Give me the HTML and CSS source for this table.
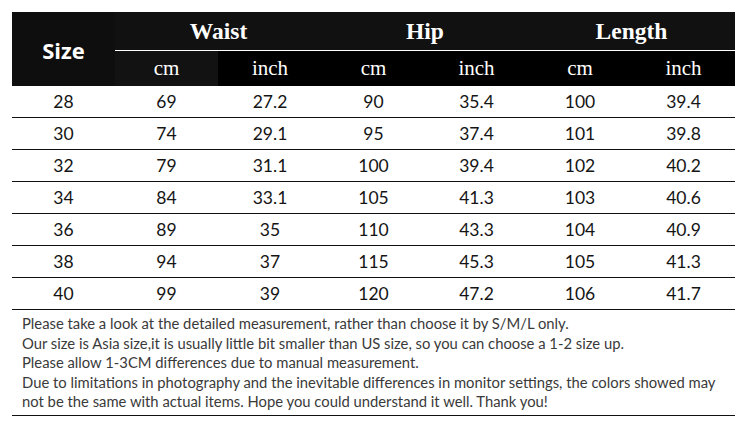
FILE: index.html
```html
<!DOCTYPE html>
<html>
<head>
<meta charset="utf-8">
<link rel="stylesheet" href="styles.css">
</head>
<body>
<div class="chart">
  <table class="size-table">
    <colgroup>
      <col class="c-size"><col class="c1"><col class="c2"><col class="c1"><col class="c1"><col class="c2"><col class="c1">
    </colgroup>
    <thead>
      <tr class="head-top">
        <th rowspan="2" class="size-head">Size</th>
        <th colspan="2" class="group">Waist</th>
        <th colspan="2" class="group">Hip</th>
        <th colspan="2" class="group">Length</th>
      </tr>
      <tr class="head-units">
        <th class="unit unit-gray">cm</th>
        <th class="unit">inch</th>
        <th class="unit">cm</th>
        <th class="unit">inch</th>
        <th class="unit">cm</th>
        <th class="unit">inch</th>
      </tr>
    </thead>
    <tbody>
      <tr><td>28</td><td>69</td><td>27.2</td><td>90</td><td>35.4</td><td>100</td><td>39.4</td></tr>
      <tr><td>30</td><td>74</td><td>29.1</td><td>95</td><td>37.4</td><td>101</td><td>39.8</td></tr>
      <tr><td>32</td><td>79</td><td>31.1</td><td>100</td><td>39.4</td><td>102</td><td>40.2</td></tr>
      <tr><td>34</td><td>84</td><td>33.1</td><td>105</td><td>41.3</td><td>103</td><td>40.6</td></tr>
      <tr><td>36</td><td>89</td><td>35</td><td>110</td><td>43.3</td><td>104</td><td>40.9</td></tr>
      <tr><td>38</td><td>94</td><td>37</td><td>115</td><td>45.3</td><td>105</td><td>41.3</td></tr>
      <tr><td>40</td><td>99</td><td>39</td><td>120</td><td>47.2</td><td>106</td><td>41.7</td></tr>
    </tbody>
  </table>
  <div class="notes">
    <p>Please take a look at the detailed measurement, rather than choose it by S/M/L only.</p>
    <p>Our size is Asia size,it is usually little bit smaller than US size, so you can choose a 1-2 size up.</p>
    <p>Please allow 1-3CM differences due to manual measurement.</p>
    <p>Due to limitations in photography and the inevitable differences in monitor settings, the colors showed may not be the same with actual items. Hope you could understand it well. Thank you!</p>
  </div>
</div>
</body>
</html>
```

FILE: styles.css
```css
html, body {
  margin: 0;
  padding: 0;
  background: #ffffff;
}
body {
  padding: 12px 0 0 12px;
}
.chart {
  width: 723px;
}
.size-table {
  width: 723px;
  table-layout: fixed;
  border-collapse: separate;
  border-spacing: 0;
}
.c-size { width: 103px; }
.c1 { width: 103px; }
.c2 { width: 104px; }

.size-table th {
  padding: 0;
  color: #ffffff;
  text-align: center;
  box-sizing: border-box;
}
.head-top th {
  background: #111111;
}
.size-head {
  font-family: "Open Sans", "Liberation Sans", sans-serif;
  font-weight: 700;
  font-size: 22px;
  background: #0e0e0e !important;
  padding-top: 2px !important;
}
.group {
  height: 39px;
  font-family: "Liberation Serif", serif;
  font-weight: 700;
  font-size: 23.5px;
  border-bottom: 1px solid #ffffff;
}
.head-units th {
  height: 35px;
}
.unit {
  background: #000000;
  font-family: "Liberation Serif", serif;
  font-weight: 400;
  font-size: 21px;
}
.unit-gray {
  background: #121212 !important;
}
.size-table td {
  height: 32px;
  padding: 0 0 1px 0;
  box-sizing: border-box;
  border-bottom: 1px solid #111111;
  text-align: center;
  font-family: Lato, "Open Sans", sans-serif;
  font-size: 17.5px;
  color: #141414;
}
.notes {
  border-bottom: 1px solid #111111;
  padding: 4px 10px 3px 10px;
  font-family: Lato, "Open Sans", sans-serif;
  font-size: 14.8px;
  line-height: 19.5px;
  color: #3a3a3a;
}
.notes p {
  margin: 0;
}
```
